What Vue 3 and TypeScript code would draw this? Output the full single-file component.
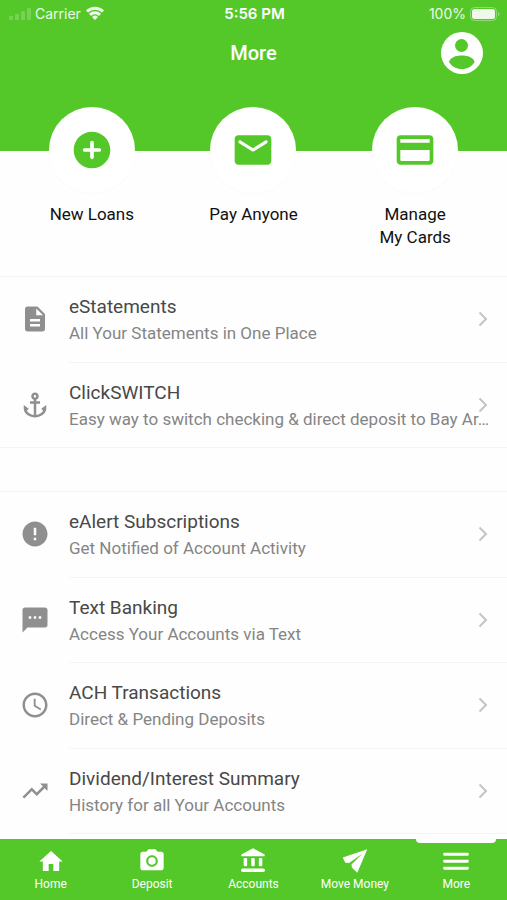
<script setup lang="ts">
interface QuickAction {
  id: string
  lines: string[]
  icon: string
}

interface MenuItem {
  title: string
  detail: string
  icon: string
}

interface Tab {
  label: string
  icon: string
}

const quickActions: QuickAction[] = [
  {
    id: 'loans',
    lines: ['New Loans'],
    icon: 'M12 2C6.48 2 2 6.48 2 12s4.48 10 10 10 10-4.48 10-10S17.52 2 12 2zm4 11h-3v3c0 .55-.45 1-1 1s-1-.45-1-1v-3H8c-.55 0-1-.45-1-1s.45-1 1-1h3V8c0-.55.45-1 1-1s1 .45 1 1v3h3c.55 0 1 .45 1 1s-.45 1-1 1z',
  },
  {
    id: 'pay',
    lines: ['Pay Anyone'],
    icon: 'M20 4H4c-1.1 0-2 .9-2 2v12c0 1.1.9 2 2 2h16c1.1 0 2-.9 2-2V6c0-1.1-.9-2-2-2zm-.4 4.25l-7.07 4.42c-.32.2-.74.2-1.06 0L4.4 8.25c-.25-.16-.4-.43-.4-.72 0-.67.73-1.07 1.3-.72L12 11l6.7-4.19c.57-.35 1.3.05 1.3.72 0 .29-.15.56-.4.72z',
  },
  {
    id: 'cards',
    lines: ['Manage', 'My Cards'],
    icon: 'M20 4H4c-1.11 0-1.99.89-1.99 2L2 18c0 1.11.89 2 2 2h16c1.11 0 2-.89 2-2V6c0-1.11-.89-2-2-2zm0 13.5c0 .28-.22.5-.5.5h-15c-.28 0-.5-.22-.5-.5V12h16v5.5zM20 8H4V6h16v2z',
  },
]

const groups: MenuItem[][] = [
  [
    {
      title: 'eStatements',
      detail: 'All Your Statements in One Place',
      icon: 'M14 2H6c-1.1 0-1.99.9-1.99 2L4 20c0 1.1.89 2 1.99 2H18c1.1 0 2-.9 2-2V8l-6-6zm2 16H8v-2h8v2zm0-4H8v-2h8v2zm-3-5V3.5L18.5 9H13z',
    },
    {
      title: 'ClickSWITCH',
      detail: 'Easy way to switch checking & direct deposit to Bay Ar…',
      icon: 'M17 15l1.55 1.55c-.96 1.69-3.33 3.04-5.55 3.37V11h3V9h-3V7.82C14.16 7.4 15 6.3 15 5c0-1.65-1.35-3-3-3S9 3.35 9 5c0 1.3.84 2.4 2 2.82V9H8v2h3v8.92c-2.22-.33-4.59-1.68-5.55-3.37L7 15l-4-3v3c0 3.88 4.92 7 9 7s9-3.12 9-7v-3l-4 3zM12 4c.55 0 1 .45 1 1s-.45 1-1 1-1-.45-1-1 .45-1 1-1z',
    },
  ],
  [
    {
      title: 'eAlert Subscriptions',
      detail: 'Get Notified of Account Activity',
      icon: 'M12 2C6.48 2 2 6.48 2 12s4.48 10 10 10 10-4.48 10-10S17.52 2 12 2zm1 15h-2v-2h2v2zm0-4h-2V7h2v6z',
    },
    {
      title: 'Text Banking',
      detail: 'Access Your Accounts via Text',
      icon: 'M20 2H4c-1.1 0-1.99.9-1.99 2L2 22l4-4h14c1.1 0 2-.9 2-2V4c0-1.1-.9-2-2-2zM9 11H7V9h2v2zm4 0h-2V9h2v2zm4 0h-2V9h2v2z',
    },
    {
      title: 'ACH Transactions',
      detail: 'Direct & Pending Deposits',
      icon: 'M11.99 2C6.47 2 2 6.48 2 12s4.47 10 9.99 10C17.52 22 22 17.52 22 12S17.52 2 11.99 2zM12 20c-4.42 0-8-3.58-8-8s3.58-8 8-8 8 3.58 8 8-3.58 8-8 8zm.5-13H11v6l5.25 3.15.75-1.23-4.5-2.67z',
    },
    {
      title: 'Dividend/Interest Summary',
      detail: 'History for all Your Accounts',
      icon: 'M16 6l2.29 2.29-4.88 4.88-4-4L2 16.59 3.41 18l6-6 4 4 6.3-6.29L22 12V6z',
    },
  ],
]

const tabs: Tab[] = [
  { label: 'Home', icon: 'M10 20.5v-6h4v6h5v-8h3L12 3.5 2 12.5h3v8z' },
  {
    label: 'Deposit',
    icon: 'M9 2L7.17 4H4c-1.1 0-2 .9-2 2v12c0 1.1.9 2 2 2h16c1.1 0 2-.9 2-2V6c0-1.1-.9-2-2-2h-3.17L15 2H9zm3 15c-2.76 0-5-2.24-5-5s2.24-5 5-5 5 2.24 5 5-2.24 5-5 5zm0-1.8a3.2 3.2 0 1 0 0-6.4 3.2 3.2 0 0 0 0 6.4z',
  },
  {
    label: 'Accounts',
    icon: 'M12 1L2 6.5V8h20V6.5zM5 9.5h1a1 1 0 0 1 1 1v5a1 1 0 0 1-1 1H5a1 1 0 0 1-1-1v-5a1 1 0 0 1 1-1zM11.5 9.5h1a1 1 0 0 1 1 1v5a1 1 0 0 1-1 1h-1a1 1 0 0 1-1-1v-5a1 1 0 0 1 1-1zM18 9.5h1a1 1 0 0 1 1 1v5a1 1 0 0 1-1 1h-1a1 1 0 0 1-1-1v-5a1 1 0 0 1 1-1zM3.2 18.5h17.6a1.2 1.2 0 0 1 0 3H3.2a1.2 1.2 0 0 1 0-3z',
  },
  { label: 'Move Money', icon: 'M22.5 2L1.5 9l2.2 4.5 3.3.3L18.5 5.5 9 15l.3 2.5L14 22z' },
  {
    label: 'More',
    icon: 'M2 5h20q1 0 1 1.2T22 7.4H2q-1 0-1-1.2T2 5zM2 11h20q1 0 1 1.2t-1 1.2H2q-1 0-1-1.2T2 11zM2 17h20q1 0 1 1.2t-1 1.2H2q-1 0-1-1.2T2 17z',
  },
]

const activeTab = 'More'
</script>

<template>
  <div class="screen">
    <header class="header">
      <div class="status">
        <div class="carrier">
          <svg class="signal" viewBox="0 0 22 14" aria-hidden="true">
            <rect x="0" y="9" width="4" height="4" rx="1" />
            <rect x="6" y="7" width="4" height="6" rx="1" />
            <rect x="12" y="4" width="4" height="9" rx="1" />
            <rect x="18" y="1" width="4" height="12" rx="1" />
          </svg>
          <span>Carrier</span>
          <svg class="wifi" viewBox="0 0 20 15" aria-hidden="true">
            <path d="M2 5.5a11.5 11.5 0 0 1 16 0M5 8.8a7.2 7.2 0 0 1 10 0" />
            <path class="dot" d="M10 14l-3-3a4.3 4.3 0 0 1 6 0z" />
          </svg>
        </div>
        <span class="time">5:56 PM</span>
        <div class="battery">
          <span>100%</span>
          <svg viewBox="0 0 30 14" aria-hidden="true">
            <rect class="case" x="0.5" y="0.5" width="26" height="13" rx="4" />
            <rect x="2" y="2" width="23" height="10" rx="2.5" />
            <path class="cap" d="M28 5c2 .5 2 3.5 0 4z" />
          </svg>
        </div>
      </div>
      <div class="titlebar">
        <h1>More</h1>
        <button class="profile" type="button" aria-label="Profile">
          <svg viewBox="0 0 42 42" aria-hidden="true">
            <circle class="disc" cx="21" cy="21" r="21" />
            <circle cx="20.5" cy="13.5" r="6.5" />
            <path d="M8 30c1-4.5 7-6.5 12.8-6.5s11.8 2 12.8 6.5c-2.6 4.5-7.3 7-12.8 7S10.6 34.5 8 30z" />
          </svg>
        </button>
      </div>
    </header>

    <main class="content">
      <nav class="quick" aria-label="Quick actions">
        <a v-for="action in quickActions" :key="action.id" href="#" class="action">
          <span class="bubble">
            <svg viewBox="0 0 24 24" aria-hidden="true"><path :d="action.icon" /></svg>
          </span>
          <span class="caption">
            <span v-for="line in action.lines" :key="line">{{ line }}</span>
          </span>
        </a>
      </nav>

      <ul v-for="(group, index) in groups" :key="index" class="group">
        <li v-for="item in group" :key="item.title">
          <a href="#" class="row">
            <svg class="glyph" viewBox="0 0 24 24" aria-hidden="true"><path :d="item.icon" /></svg>
            <span class="text">
              <span class="title">{{ item.title }}</span>
              <span class="detail">{{ item.detail }}</span>
            </span>
            <svg class="chevron" viewBox="0 0 10 16" aria-hidden="true"><path d="M1.5 1.5L8 8l-6.5 6.5" /></svg>
          </a>
        </li>
      </ul>
    </main>

    <nav class="tabs" aria-label="Main">
      <a
        v-for="tab in tabs"
        :key="tab.label"
        href="#"
        class="tab"
        :class="{ active: tab.label === activeTab }"
        :aria-current="tab.label === activeTab ? 'page' : undefined"
      >
        <svg viewBox="0 0 24 24" aria-hidden="true"><path :d="tab.icon" fill-rule="evenodd" /></svg>
        <span>{{ tab.label }}</span>
      </a>
    </nav>
  </div>
</template>

<style>
body {
  margin: 0;
  background: #fefefe;
}
</style>

<style scoped>
.screen {
  --green: #54c829;
  display: flex;
  flex-direction: column;
  min-height: 100vh;
  font-family: Roboto, 'Liberation Sans', sans-serif;
  background: #fefefe;
}

a {
  color: inherit;
  text-decoration: none;
}

.header {
  box-sizing: border-box;
  height: 151px;
  color: #fff;
  background: var(--green);
}

.status {
  display: grid;
  grid-template-columns: 1fr auto 1fr;
  align-items: center;
  height: 27px;
  padding: 0 7px 0 9px;
  font-family: Inter, sans-serif;
  font-size: 14px;
}

.carrier,
.battery {
  display: flex;
  align-items: center;
  gap: 4px;
  opacity: 0.9;
}

.battery {
  justify-content: flex-end;
}

.signal {
  width: 22px;
  height: 14px;
  fill: #fff;
  opacity: 0.22;
}

.wifi {
  width: 20px;
  height: 15px;
  fill: none;
  stroke: #fff;
  stroke-width: 3;
}

.wifi .dot {
  fill: #fff;
  stroke: none;
}

.time {
  font-size: 15px;
  font-weight: 600;
}

.battery svg {
  width: 30px;
  height: 14px;
  fill: #fff;
}

.battery .case {
  fill: none;
  stroke: #fff;
  opacity: 0.4;
}

.battery .cap {
  opacity: 0.4;
}

.titlebar {
  display: grid;
  grid-template-columns: 1fr auto 1fr;
  align-items: center;
  height: 51px;
  padding: 0 24px;
}

h1 {
  grid-column: 2;
  margin: 0;
  font-size: 20px;
  font-weight: 500;
}

.profile {
  justify-self: end;
  width: 42px;
  height: 42px;
  padding: 0;
  border: 0;
  background: none;
}

.profile svg {
  display: block;
  fill: var(--green);
}

.profile .disc {
  fill: #fff;
}

.content {
  display: flex;
  flex: 1;
  flex-direction: column;
  padding-bottom: 5px;
}

.quick {
  display: grid;
  grid-template-columns: repeat(3, 1fr);
  box-sizing: border-box;
  min-height: 169px;
  margin-top: -44px;
  padding: 0 11px;
}

.action {
  display: flex;
  flex-direction: column;
  align-items: center;
  gap: 10px;
}

.bubble {
  display: grid;
  place-items: center;
  width: 86px;
  height: 86px;
  border-radius: 50%;
  background: #fff;
  box-shadow: 0 1px 3px rgba(0, 0, 0, 0.02);
}

.bubble svg {
  width: 44px;
  height: 44px;
  fill: var(--green);
}

.caption {
  display: flex;
  flex-direction: column;
  align-items: center;
  font-size: 17px;
  line-height: 23px;
  color: #111;
}

.group {
  display: grid;
  grid-auto-rows: 1fr;
  box-sizing: border-box;
  min-height: 172px;
  margin: 0;
  padding: 0;
  list-style: none;
  border-top: 1px solid #f2f2f2;
}

.group:last-child {
  flex: 1;
  margin-top: 43px;
}

.group li {
  display: flex;
  flex-direction: column;
  min-width: 0;
}

.group li::after {
  content: '';
  height: 1px;
  margin-left: 69px;
  background: #f4f4f4;
}

.group:not(:last-child) li:last-child::after {
  margin-left: 0;
}

.row {
  display: flex;
  flex: 1;
  align-items: center;
  position: relative;
  min-height: 80px;
  padding: 0 7px 0 20px;
}

.glyph {
  flex: none;
  width: 30px;
  height: 30px;
  margin-right: 19px;
  fill: #8f8f8f;
}

.text {
  display: flex;
  flex-direction: column;
  min-width: 0;
  padding-top: 2px;
  line-height: 26px;
}

.title {
  font-size: 19px;
  color: #484848;
}

.detail {
  overflow: hidden;
  font-size: 17px;
  color: #858585;
  text-overflow: ellipsis;
  white-space: nowrap;
}

.chevron {
  position: absolute;
  right: 19px;
  width: 10px;
  height: 16px;
  fill: none;
  stroke: #c4c4c4;
  stroke-width: 2;
}

.tabs {
  display: grid;
  grid-template-columns: repeat(5, 1fr);
  height: 61px;
  color: #fff;
  background: var(--green);
}

.tab {
  display: flex;
  flex-direction: column;
  align-items: center;
  position: relative;
  gap: 1px;
  padding-top: 8px;
  font-size: 12px;
  line-height: 16px;
}

.tab svg {
  width: 28px;
  height: 28px;
  fill: #fff;
}

.tab.active::before {
  content: '';
  position: absolute;
  top: 0;
  width: 80px;
  height: 4px;
  border-radius: 0 0 4px 4px;
  background: #fefefe;
}
</style>
